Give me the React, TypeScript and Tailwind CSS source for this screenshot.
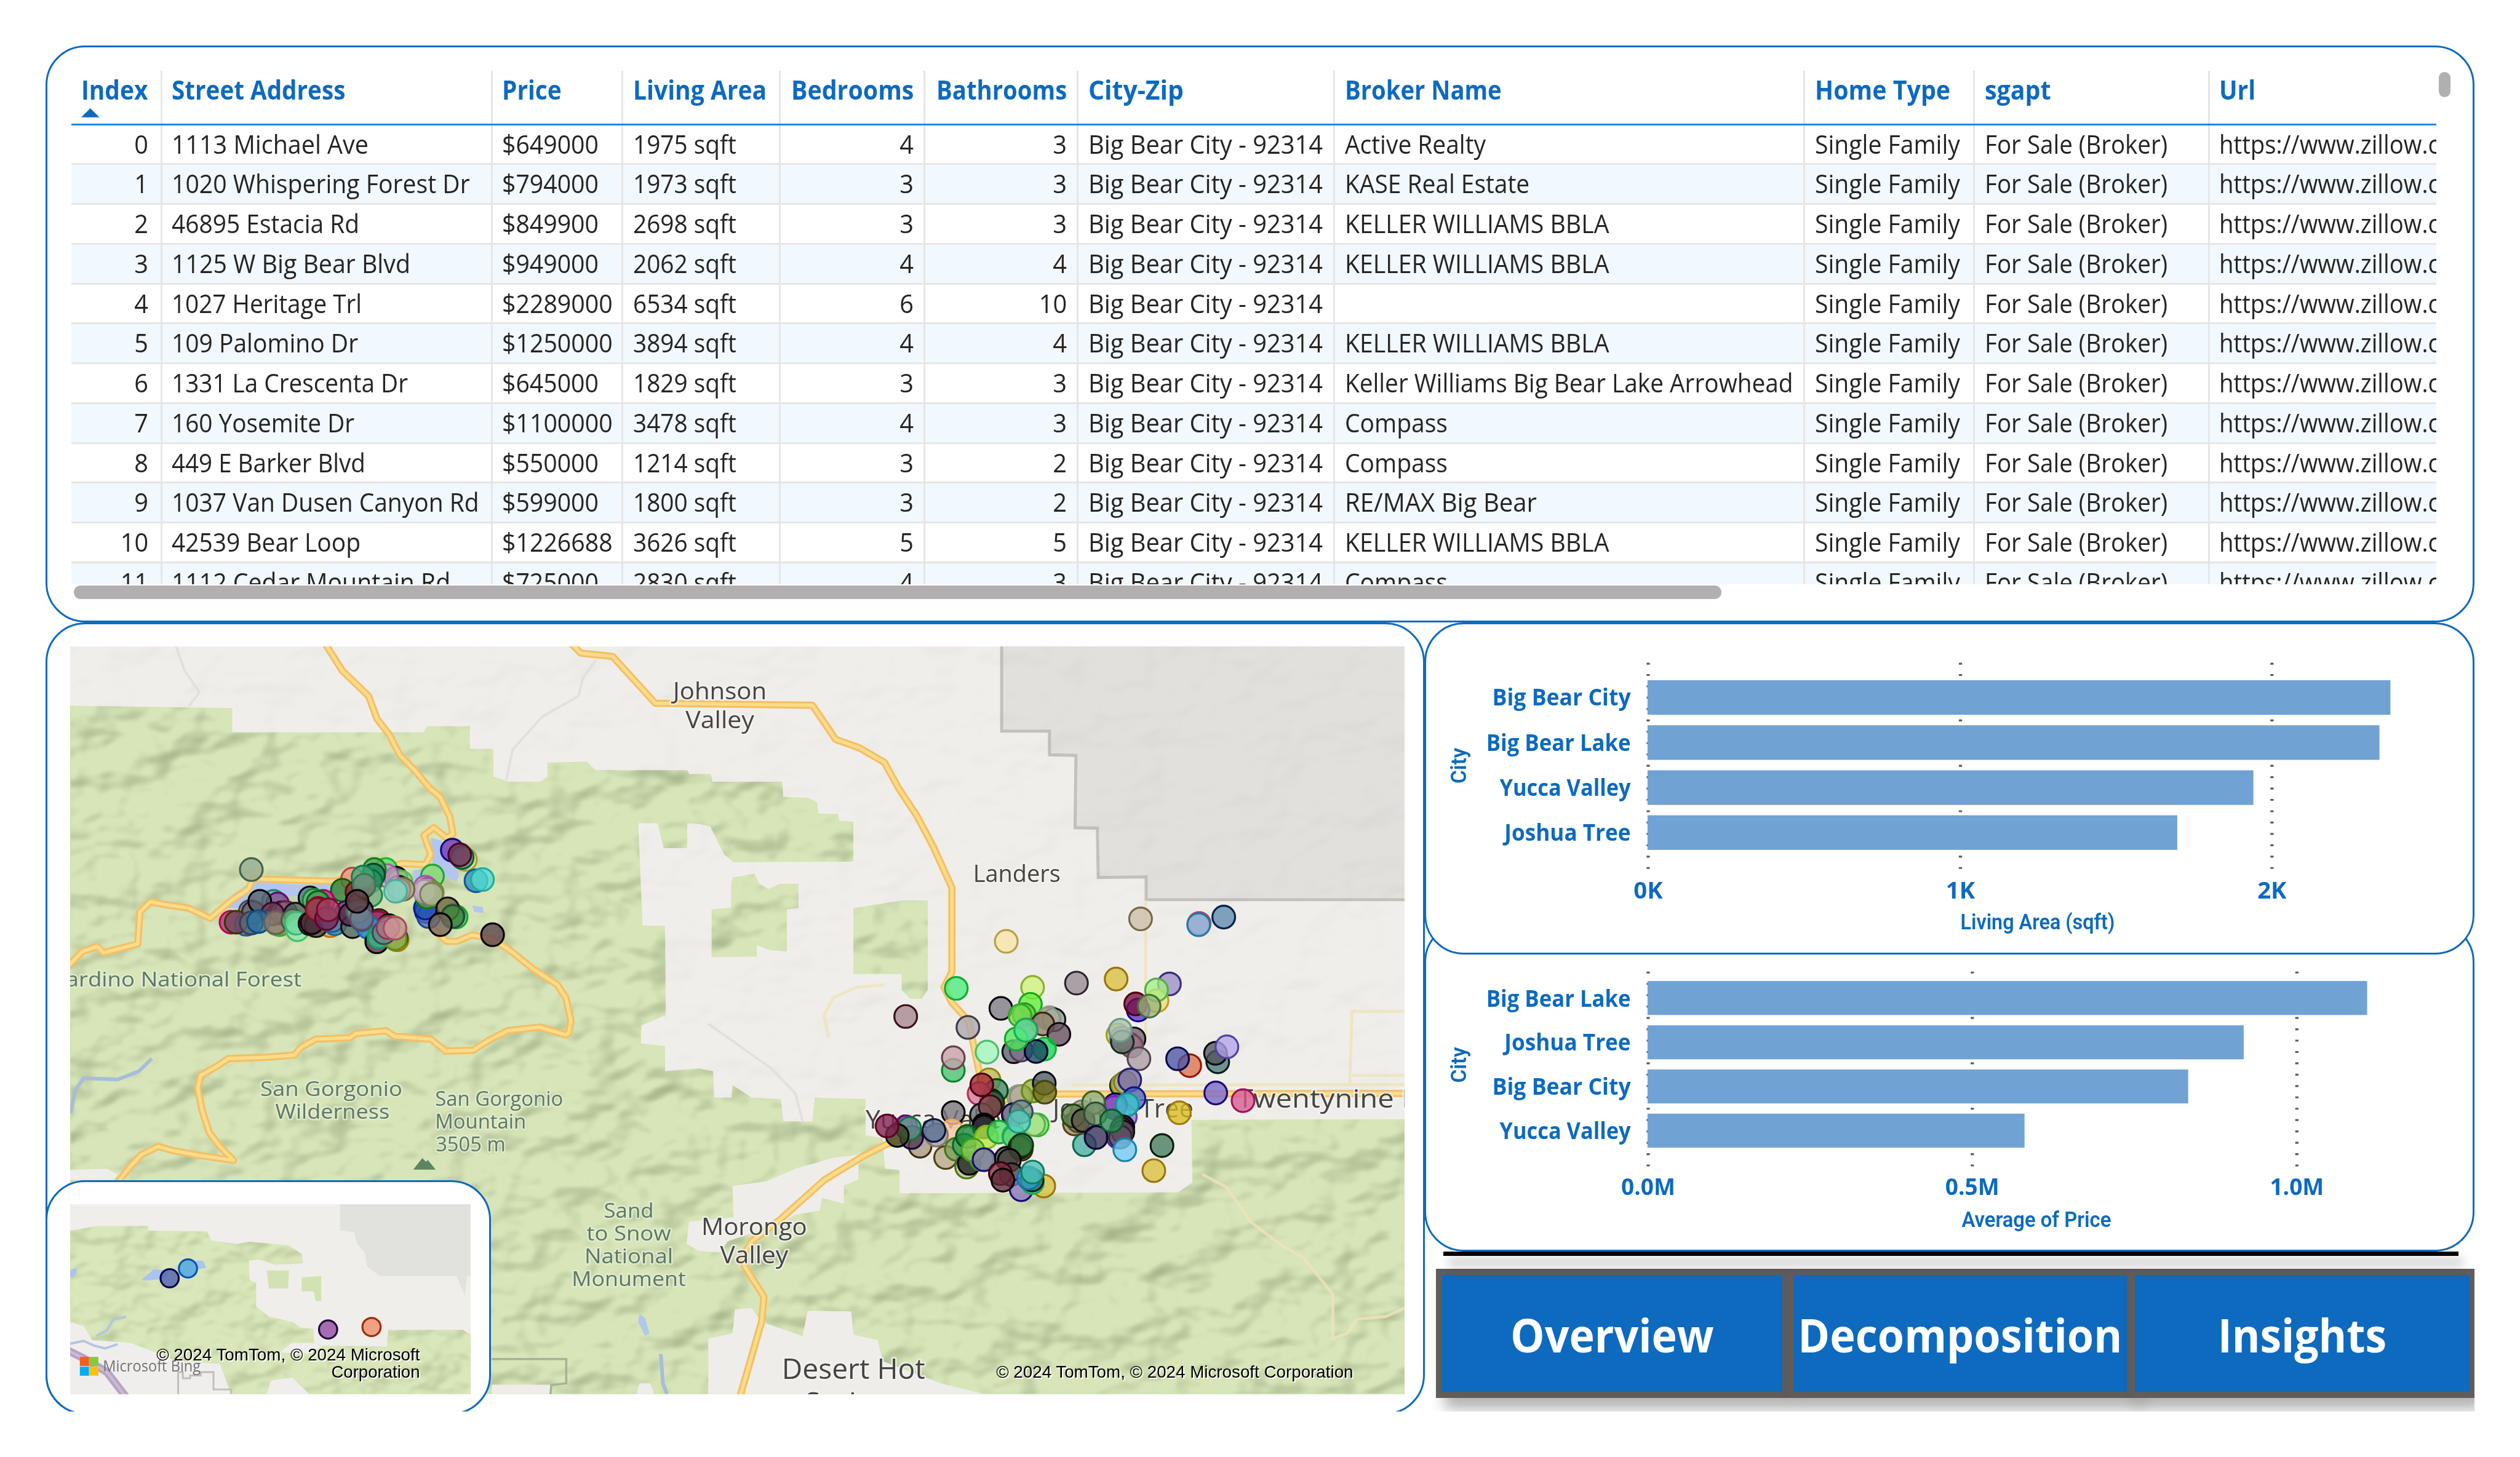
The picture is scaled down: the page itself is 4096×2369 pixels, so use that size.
import { useMemo } from "react";

/* ------------------------------------------------------------------ */
/* Text helper: condenses a line of text to a given advance width      */
/* ------------------------------------------------------------------ */

let measuringContext: CanvasRenderingContext2D | null = null;

function naturalWidth(text: string, size: number, weight: number) {
  if (!measuringContext) measuringContext = document.createElement("canvas").getContext("2d");
  if (!measuringContext) return 0;
  measuringContext.font = `${weight} ${size}px "Open Sans"`;
  return measuringContext.measureText(text).width;
}

type FitProps = {
  text: string;
  size: number;
  weight?: number;
  width?: number;
  align?: "left" | "right" | "center";
};

const ORIGIN = { left: "origin-left", right: "origin-right", center: "origin-center" };

function Fit({ text, size, weight = 400, width, align = "left" }: FitProps) {
  const ratio = useMemo(() => {
    const natural = naturalWidth(text, size, weight);
    return width && natural ? width / natural : 0.943;
  }, [text, size, weight, width]);
  return (
    <span className={`inline-block whitespace-pre ${ORIGIN[align]}`} style={{ transform: `scaleX(${ratio})` }}>
      {text}
    </span>
  );
}

/* ------------------------------------------------------------------ */
/* Listings table                                                      */
/* ------------------------------------------------------------------ */

const COLUMNS: { label: string; width: number; right?: boolean }[] = [
  { label: "Index", width: 110, right: true },
  { label: "Street Address", width: 286 },
  { label: "Price", width: 98 },
  { label: "Living Area", width: 220 },
  { label: "Bedrooms", width: 202, right: true },
  { label: "Bathrooms", width: 215, right: true },
  { label: "City-Zip", width: 157 },
  { label: "Broker Name", width: 258 },
  { label: "Home Type", width: 223 },
  { label: "sgapt", width: 109 },
  { label: "Url", width: 60 },
];

type Listing = [string, number, string, string, number, number, string, number];

const LISTINGS: Listing[] = [
  ["1113 Michael Ave", 324, "$649000", "1975 sqft", 4, 3, "Active Realty", 232],
  ["1020 Whispering Forest Dr", 491, "$794000", "1973 sqft", 3, 3, "KASE Real Estate", 304],
  ["46895 Estacia Rd", 309, "$849900", "2698 sqft", 3, 3, "KELLER WILLIAMS BBLA", 435],
  ["1125 W Big Bear Blvd", 393, "$949000", "2062 sqft", 4, 4, "KELLER WILLIAMS BBLA", 435],
  ["1027 Heritage Trl", 313, "$2289000", "6534 sqft", 6, 10, "", 0],
  ["109 Palomino Dr", 307, "$1250000", "3894 sqft", 4, 4, "KELLER WILLIAMS BBLA", 435],
  ["1331 La Crescenta Dr", 389, "$645000", "1829 sqft", 3, 3, "Keller Williams Big Bear Lake Arrowhead", 738],
  ["160 Yosemite Dr", 301, "$1100000", "3478 sqft", 4, 3, "Compass", 169],
  ["449 E Barker Blvd", 319, "$550000", "1214 sqft", 3, 2, "Compass", 169],
  ["1037 Van Dusen Canyon Rd", 506, "$599000", "1800 sqft", 3, 2, "RE/MAX Big Bear", 316],
  ["42539 Bear Loop", 311, "$1226688", "3626 sqft", 5, 5, "KELLER WILLIAMS BBLA", 435],
  ["1112 Cedar Mountain Rd", 459, "$725000", "2830 sqft", 4, 3, "Compass", 169],
];

const GRID =
  "grid grid-cols-[146px_544px_215.5px_259.5px_237.5px_252.5px_422.5px_774.5px_279.5px_386.5px_900px]";
const CELL = "box-border whitespace-nowrap border-l-[3.05px] border-[#e6e6e6] px-[16px] first:border-l-0 first:px-[20px]";

function Cell({ text, width, right }: { text: string; width?: number; right?: boolean }) {
  return (
    <div className={right ? `${CELL} flex justify-end` : CELL}>
      {text ? <Fit text={text} size={42.67} width={width} align={right ? "right" : "left"} /> : null}
    </div>
  );
}

function ListingsTable() {
  return (
    <section className="relative h-[950px] w-full shrink-0 rounded-[65px] border-[3.05px] border-[#0d6abf] bg-white">
      <div className="mt-[38px] ml-[40px] h-[846.5px] w-[3894px] overflow-hidden">
        <div className={`${GRID} h-[90.4px] border-b-[3.05px] border-[#2385e5] text-[42.67px] leading-[62px] font-bold text-[#0d6abf]`}>
          {COLUMNS.map((column, i) => (
            <div key={column.label} className={column.right ? `${CELL} flex flex-col items-end` : CELL}>
              <Fit
                text={column.label}
                size={42.67}
                weight={700}
                width={column.width}
                align={column.right ? "right" : "left"}
              />
              {i === 0 && (
                <svg viewBox="0 0 30 15" className="mr-auto -ml-[4px] h-[15px] w-[30px]">
                  <path d="M0 15 15 0l15 15z" fill="#0d6abf" />
                </svg>
              )}
            </div>
          ))}
        </div>
        {LISTINGS.map(([street, sw, price, area, beds, baths, broker, bw], i) => (
          <div
            key={street}
            className={`${GRID} h-[65.6px] border-b-[3.05px] border-[#e6e6e6] text-[42.67px] leading-[60px] text-[#252423] odd:bg-[#f1f8fe] even:bg-white`}
          >
            <Cell text={String(i)} right />
            <Cell text={street} width={sw} />
            <Cell text={price} width={price.length > 7 ? 182 : 159} />
            <Cell text={area} width={170} />
            <Cell text={String(beds)} right />
            <Cell text={String(baths)} right />
            <Cell text="Big Bear City - 92314" width={386} />
            <Cell text={broker} width={bw} />
            <Cell text="Single Family" width={239} />
            <Cell text="For Sale (Broker)" width={301} />
            <Cell text="https://www.zillow.com/homedetails/" width={674} />
          </div>
        ))}
      </div>
      <div className="absolute top-[41px] right-[36px] h-[41px] w-[20px] rounded-full bg-[#b1afb0]" />
      <div className="absolute top-[887px] left-[44px] h-[22px] w-[2713px] rounded-full bg-[#b1afb0]" />
    </section>
  );
}

/* ------------------------------------------------------------------ */
/* Map geometry                                                        */
/* ------------------------------------------------------------------ */

type Sheet = [number, number, number, number];
const W: Sheet = [100, 1050, 1.4255, 2.3758];
const E: Sheet = [1150, 1050, 1.3067, 2.3758];
const SW: Sheet = [60, 1650, 1.4255, 2.178];
const SE: Sheet = [1150, 1650, 1.2544, 2.178];

function pts(sheet: Sheet, list: string) {
  return list
    .trim()
    .split(/\s+/)
    .map((pair) => {
      const [x, y] = pair.split(",").map(Number);
      return `${(sheet[0] + x / sheet[2]).toFixed(1)},${(sheet[1] + y / sheet[3]).toFixed(1)}`;
    })
    .join(" ");
}

const FOREST = [
  pts(W, "21,268 402,277 402,372 850,372 860,348 960,348 960,437 1015,437 1015,545 1050,565 1125,565 1142,545 1142,490 1235,487 1255,520 1470,520 1475,535 1525,535"),
  pts(E, "30,565 180,565 182,625 235,628 255,645 258,690 300,692 303,718 333,722 333,878 75,880 55,850 25,740 0,730"),
  pts(W, "1470,728 1470,825 1415,825 1400,728 1355,728 1365,1128 1418,1130 1420,1500"),
  pts(SW, "1475,50 1420,85 1418,150 1475,160 1475,250"),
  pts(SE, "0,240 30,250 32,345 68,345 70,300 110,345 170,350 175,430 235,430 240,345 345,350 345,480 380,490 385,600 415,605 415,688 990,685 1020,650 1018,425 1459,422 1459,1409"),
  pts(SW, "78,1409"),
].join(" ");

const BLOCKS = [
  pts(E, "70,960 75,940 120,925 130,965 150,985 175,965 215,965 215,1060 190,1065 190,1230 155,1225 125,1205 125,1250 28,1252 28,1065 70,1058"),
  pts(E, "333,1060 440,1030 493,1030 493,1380 480,1415 455,1415 437,1380 437,1318 333,1318"),
];

const CLEARINGS = [
  pts(SE, "400,520 320,552 280,560 200,600 140,645 70,662 72,775 -20,790 -25,870 0,895 45,900 60,860 170,795 200,765 250,750 255,705 300,725 300,660 330,640 330,560"),
  pts(SE, "75,1105 110,1100 130,1150 215,1200 225,1110 315,1112 320,1195 370,1215 380,1290 500,1370 590,1409 20,1409 20,1210 70,1190"),
  pts(SW, "78,605 165,600 190,620 180,640 78,640"),
  pts(SW, "1068,1375 1205,1375 1205,1409 1068,1409"),
  pts(SW, "1415,1370 1440,1370 1450,1409 1408,1409"),
];

const BASE = pts(E, "652,36 652,367 755,367 755,460 812,462 810,745 858,747 860,940 963,938 963,1027 1540,1027 1540,20 652,20");

const ROADS = [
  pts(W, "622,30 660,130 722,230 742,320 770,380 795,460 830,520 865,590 890,625 912,700 920,770 905,785 875,745 852,775 868,850 855,890 800,885 765,905 640,955 540,950 450,945 440,985 400,1030 350,1100 300,1060 240,1045 210,1035 185,1075 180,1200 100,1235 85,1210 50,1230 15,1290"),
  pts(W, "860,1120 905,1190 930,1190 965,1165 1010,1180 1050,1220 1110,1300 1165,1360 1185,1410 1197,1500 1192,1548") +
    " " +
    pts(SW, "1243,120 1180,92 1105,105 1060,140 1025,175 960,178 925,135 840,125 820,105 750,115 735,130 655,135 620,165 605,192 540,200 450,205 420,235 385,265 378,310 388,390 405,470 430,520 462,570 380,552 320,535 285,520 245,550 215,600 190,650"),
  pts(W, "1195,20 1220,62 1295,75 1395,258") +
    " " +
    pts(E, "245,266 295,400 345,432 400,490 430,590 470,700 505,820 545,980 545,1310 528,1370 545,1430 580,1500") +
    " " +
    pts(SE, "560,90 578,240 590,330"),
  pts(SE, "1459,330 720,332 640,345 600,400 520,450 440,480 385,515 340,555 260,640 170,780 110,860 90,915 95,950 135,1060 130,1150 85,1420"),
];

const MINOR = [
  pts(E, "962,1030 962,1568"),
  pts(SE, "770,300 1459,298"),
  pts(SE, "1459,35 1350,35 1345,300"),
  pts(SE, "1459,265 1350,265"),
  pts(SE, "1040,620 1090,665 1140,790 1200,870 1250,920 1310,1050 1310,1210 1340,1190 1360,1140 1420,1130 1459,1100"),
  pts(E, "400,1360 340,1370 290,1410 270,1480 280,1568"),
];

const TRAILS = [
  pts(W, "270,36 290,130 325,215 300,270"),
  pts(W, "1255,90 1225,160 1215,230 1130,310 1060,440 1045,560"),
  pts(SE, "20,80 150,240 200,330 215,430"),
];

const WATER = [
  pts(W, "380,1060 400,1010 445,958 560,968 640,962 700,985 640,1015 500,1015 430,1060"),
  pts(W, "868,785 892,795 935,930 928,955 890,930 872,880"),
  pts(W, "825,915 862,900 850,965 830,960"),
  pts(W, "965,1050 990,1055 992,1080 970,1075"),
  pts(SW, "1415,1120 1428,1135 1438,1190 1428,1200 1412,1150"),
];

const STREAMS = [
  pts(SW, "270,205 240,250 190,280 110,275 90,320 80,400"),
  pts(SW, "1465,1265 1470,1370 1480,1409"),
];

type Dot = [number, number, string, string];

function toDots(sheet: Sheet, rows: string): Dot[] {
  return rows
    .trim()
    .split(/\s*\n\s*/)
    .map((row) => {
      const [x, y, fill, stroke] = row.split(" ");
      return [sheet[0] + Number(x) / sheet[2], sheet[1] + Number(y) / sheet[3], fill, stroke];
    });
}

const BIG_BEAR = toDots([350, 1370, 3, 3], `
190 188 #96aa90 #45624a
1183 92 #6a35b8 #12068a
1248 138 #e8e488 #a8a030
1232 128 #3c9a70 #066048
1220 115 #76305c #4e0420
1300 243 #3090c0 #0c58a0
1332 237 #50dcd0 #20ac9c
1085 220 #84dc78 #28a030
1055 395 #3050b8 #081c78
1066 420 #5070c8 #1c449c
1050 378 #2050b0 #06208c
1058 324 #60a040 #107818
1065 305 #c070c0 #a040a0
1050 275 #d8a0d0 #a858a8
1062 285 #c890c8 #a050a4
1084 302 #90b048 #6c9030
1045 295 #d0c0cc #a494a0
1080 310 #a8b890 #788458
1202 422 #50c868 #10a830
1188 415 #50a068 #208848
1160 382 #6a6438 #141008
1185 420 #408840 #284838
1124 460 #746458 #050505
1382 510 #584048 #050505
855 188 #58e068 #20b838
905 230 #404040 #080808
930 250 #90e080 #50c050
918 275 #a0c8a0 #181818
860 218 #d0a0d0 #a060a8
690 235 #f09080 #c04040
798 188 #50a850 #108018
794 215 #108858 #064830
780 245 #309060 #106838
640 290 #30802c #086010
780 315 #70b080 #208848
712 300 #803838 #700810
745 270 #803030 #6c0810
742 225 #48a878 #108050
748 265 #709080 #387858
940 285 #b0b090 #706848
920 290 #b0a890 #988878
903 295 #80d8c8 #48b0a0
480 328 #607080 #080810
545 345 #d02080 #b00060
500 340 #60c070 #108830
520 350 #40a050 #086018
90 448 #b83078 #b80060
165 458 #4070a0 #1858b0
300 345 #60b0a0 #208878
320 358 #8c4c98 #601068
185 395 #807880 #504850
200 400 #686070 #302834
232 345 #585c6c #050508
115 448 #704858 #383808
190 452 #606878 #403c50
330 460 #90c070 #40a830
315 455 #a0b080 #709048
340 402 #606050 #101008
360 400 #906080 #701850
295 407 #70405c #380c30
226 445 #2c74a0 #085080
310 450 #908070 #686058
408 408 #506058 #101414
395 440 #80a080 #406048
418 485 #90e8b0 #40c068
412 453 #70dca0 #38b870
580 465 #e0a060 #d07010
480 455 #504040 #181010
510 465 #4c5038 #181808
490 450 #482838 #180410
660 400 #683080 #400860
520 380 #903040 #800820
515 385 #984050 #880c28
603 455 #3c98c4 #1068a8
590 440 #5080b0 #205890
562 430 #782850 #600434
570 387 #a04060 #780c30
690 470 #4c6460 #080808
680 410 #602848 #200818
735 390 #503850 #100810
820 440 #686848 #282808
815 450 #b81868 #900050
870 465 #606050 #101008
765 470 #3090c8 #0868b0
770 475 #4090c0 #1868b8
735 435 #607898 #404868
715 390 #807888 #605860
718 395 #789088 #486860
735 430 #687890 #585070
713 345 #583840 #050505
910 535 #c8a850 #a87808
905 525 #508858 #085040
810 545 #583050 #050505
820 520 #38c088 #10a060
900 530 #98b848 #688c18
895 475 #98c850 #78a818
845 500 #688888 #404858
865 475 #b07088 #883858
900 478 #d09898 #b04868
`);

const LANDERS = toDots(E, `
951 1102 #cabfa6 #76684a
1077 1120 #e07890 #b83c58
1076 1125 #86bae0 #1c7cac
1130 1095 #5f8bae #04204a
662 1190 #f8e5a6 #b8a040
`);

const HI_DESERT = toDots([1420, 1580, 2.45, 3], `
174 284 #a58890 #3e0e1c
378 145 #4cec7c #0cac34
425 338 #aca6b0 #3c3844
558 244 #7c7a84 #05050c
686 140 #d0f47c #88b030
863 119 #978a92 #2c2230
1023 99 #dac03c #9a7408
1238 123 #9c90c8 #3a2c7c
1188 206 #f0de70 #c09c20
1186 153 #a4f084 #54b044
1112 252 #5434c8 #140088
1102 222 #781040 #500010
1156 233 #98b47c #486c40
366 550 #48c470 #108030
366 488 #c8a0a8 #703c50
502 460 #a0f8bc #48c070
677 224 #60f038 #10a818
652 275 #60d040 #289820
635 280 #74d850 #30a828
755 290 #a0a8a0 #80a080
772 300 #98a498 #101414
750 295 #a8b0a0 #909888
727 321 #908468 #3c2c10
792 372 #64505c #140814
610 458 #5c606c #0c0810
660 350 #b070c0 #8040a0
640 450 #807088 #503860
734 445 #14d850 #10b040
700 457 #184468 #04042c
620 395 #50e85c #10a830
658 352 #50e888 #18b050
1030 375 #d0d070 #a0a020
1095 395 #70606c #100c14
1075 420 #a06c7c #803048
1085 430 #987884 #704858
1045 390 #a088b8 #806ca0
1048 410 #687468 #142c1c
1040 352 #acc4b4 #6c9884
1115 493 #a89ca4 #544450
1320 527 #d8744c #981404
1271 493 #4c54a4 #040850
1433 508 #4c7874 #04201c
1424 466 #50545c #080c10
1470 434 #b4a4ec #5440a8
1425 662 #7868cc #18087c
1535 700 #d85894 #a01058
510 597 #c0b850 #908810
640 680 #a8a898 #080c08
630 680 #b0b098 #909880
688 652 #98b440 #688810
733 614 #505868 #080c14
735 658 #70701c #444808
540 650 #408868 #084818
520 700 #406050 #081c08
525 710 #305838 #043810
470 665 #d87898 #b03060
481 622 #a02838 #4c0008
480 770 #687078 #101418
515 730 #804848 #380810
490 820 #282028 #050505
490 830 #302c34 #050505
366 759 #78747e #050508
608 770 #605878 #10083c
175 830 #903098 #68047c
232 925 #a8987c #3c280c
198 882 #503450 #14043c
190 838 #609890 #107838
140 872 #384020 #050805
99 825 #802050 #600020
360 850 #fcc8a0 #f0a860
298 870 #a0a0a0 #807870
288 847 #587094 #081438
335 981 #b8a888 #504018
378 940 #80a058 #407818
420 1028 #b0c888 #4c7808
430 1010 #1c1c1c #050505
410 920 #38a050 #086828
423 877 #18883c #045418
500 880 #b8e840 #80b810
480 990 #70c040 #389818
445 944 #90d050 #40a020
490 992 #8478b0 #200878
705 820 #70f060 #28b828
690 818 #b0e090 #68a850
550 855 #50dc64 #18a038
610 875 #70e880 #20b850
612 880 #58d078 #20a850
640 755 #709080 #304860
630 803 #58d0c0 #209888
580 985 #404848 #050808
640 940 #806048 #402008
635 930 #404c30 #141808
642 920 #348040 #04380c
592 995 #444038 #050505
600 1065 #504048 #100c10
640 1140 #8474bc #200878
731 1122 #dac03c #9c7408
685 1105 #58d090 #20a858
684 1092 #386868 #082020
556 1060 #803040 #40000c
566 1093 #5c2c38 #0c0408
670 1082 #30a0c8 #1070a8
686 1053 #4cc0b0 #108060
1045 625 #9ca058 #080c30
1050 620 #c8c860 #989818
1060 610 #b0a880 #808020
1078 598 #7870a8 #201c78
1095 690 #5068c0 #081890
1060 780 #9080d0 #6040b8
1020 720 #6040a0 #080448
1015 735 #9050c8 #7828b0
1068 720 #38c8c8 #109898
895 918 #48b0a0 #086850
855 815 #a09068 #584018
870 800 #807868 #504c30
885 755 #a09890 #807870
850 775 #608050 #204810
890 798 #5c5448 #100c08
932 710 #90b078 #386028
940 765 #708c68 #285038
1050 830 #605068 #0c040c
1045 840 #483848 #140814
1030 880 #7068b8 #4030a0
1050 855 #584458 #140c18
942 882 #38305c #08042c
1040 880 #605060 #302838
1005 800 #309058 #085c28
1058 943 #70ccf4 #1880b0
1208 922 #447c5c #04200c
1175 1046 #dac03c #9c7408
1278 760 #dabc20 #a07c08
`);

const MEDIANS = toDots(SW, `
355 958 #42a2e8 #0c50b4
312 993 #4c5cb0 #04044c
684 1177 #9048a0 #22083c
786 1168 #f08c68 #9c2c04
`);

function Dots({ dots, r }: { dots: Dot[]; r: number }) {
  return (
    <g strokeWidth="3.2">
      {dots.map(([x, y, fill, stroke], i) => (
        <circle key={i} cx={x} cy={y} r={r} fill={fill} fillOpacity="0.78" stroke={stroke} />
      ))}
    </g>
  );
}

type LabelRow = [string, number, number, number];

function Labels({ rows, size, color, halo, anchor = "middle" }: {
  rows: LabelRow[];
  size: number;
  color: string;
  halo: string;
  anchor?: "start" | "middle" | "end";
}) {
  return (
    <g
      className="font-['Open_Sans',sans-serif]"
      fontSize={size}
      fontWeight="500"
      fill={color}
      stroke={halo}
      strokeWidth="5"
      strokeLinejoin="round"
      paintOrder="stroke"
      textAnchor={anchor}
    >
      {rows.map(([text, x, y, width]) => (
        <text key={text + y} x={x} y={y} textLength={width} lengthAdjust="spacingAndGlyphs">
          {text}
        </text>
      ))}
    </g>
  );
}

function Relief({ id, seed, frequency, scale }: { id: string; seed: number; frequency: string; scale: number }) {
  return (
    <filter id={id} x="0" y="0" width="100%" height="100%" colorInterpolationFilters="sRGB">
      <feTurbulence type="fractalNoise" baseFrequency={frequency} numOctaves="3" seed={seed} />
      <feDiffuseLighting surfaceScale={scale} diffuseConstant="1.15" lightingColor="#fff">
        <feDistantLight azimuth="225" elevation="60" />
      </feDiffuseLighting>
      <feGaussianBlur stdDeviation="2" />
    </filter>
  );
}

const ATTRIBUTION = "font-['Liberation_Sans',sans-serif] [filter:drop-shadow(2.5px_2.5px_0_#fff)]";

function RegionMap() {
  return (
    <svg viewBox="115 1065 2198 1232" preserveAspectRatio="none" className="h-[1232px] w-[2198px]">
      <defs>
        <Relief id="relief" seed={7} frequency="0.009 0.014" scale={30} />
        <clipPath id="forest">
          <polygon points={FOREST} />
          {BLOCKS.map((b) => (
            <polygon key={b} points={b} />
          ))}
        </clipPath>
      </defs>
      <rect x="115" y="1065" width="2198" height="1232" fill="#f0eeea" />
      <polygon points={FOREST} fill="#cddfa8" />
      {BLOCKS.map((b) => (
        <polygon key={b} points={b} fill="#cddfa8" />
      ))}
      <polygon points={BASE} fill="#e2e0dc" stroke="#c4c1bb" strokeWidth="5" />
      <g clipPath="url(#forest)">
        <rect x="115" y="1065" width="2198" height="1232" filter="url(#relief)" className="opacity-20 mix-blend-multiply" />
      </g>
      <rect x="115" y="1065" width="2198" height="1232" filter="url(#relief)" className="opacity-[0.03] mix-blend-multiply" />
      {CLEARINGS.map((c) => (
        <polygon key={c} points={c} fill="#efedea" />
      ))}
      <polyline points={pts(SW, "1068,1283 1243,1283 1243,1370 1208,1376 1206,1409")} fill="none" stroke="#a5b394" strokeWidth="3.5" />
      {WATER.map((w) => (
        <polygon key={w} points={w} fill="#b3c6ee" />
      ))}
      <g fill="none" stroke="#a9bcd8" strokeWidth="6" strokeLinejoin="round">
        {STREAMS.map((s) => (
          <polyline key={s} points={s} />
        ))}
      </g>
      <g fill="none" stroke="#dcddda" strokeWidth="4" strokeLinejoin="round" opacity="0.8">
        {TRAILS.map((s) => (
          <polyline key={s} points={s} />
        ))}
      </g>
      <g fill="none" stroke="#efe3b8" strokeWidth="5" strokeLinejoin="round" opacity="0.8">
        {MINOR.map((s) => (
          <polyline key={s} points={s} />
        ))}
      </g>
      <g fill="none" stroke="#f3bf68" strokeWidth="12" strokeLinejoin="round">
        {ROADS.map((s) => (
          <polyline key={s} points={s} />
        ))}
      </g>
      <g fill="none" stroke="#fbdc88" strokeWidth="5.5" strokeLinejoin="round">
        {ROADS.map((s) => (
          <polyline key={s} points={s} />
        ))}
      </g>
      <path d="M680 1927l15-19 6 6 3-3 13 16z" fill="#5d8560" />
      <Labels
        size={39}
        color="#444"
        halo="#f4f2efcc"
        rows={[
          ["Johnson", 1185, 1152.5, 154],
          ["Valley", 1185, 1199.5, 113],
          ["Landers", 1674, 1453, 144],
          ["Morongo", 1241.5, 2034.5, 174],
          ["Valley", 1241.5, 2081.5, 112],
        ]}
      />
      <Labels
        size={43}
        color="#444"
        halo="#f4f2efcc"
        anchor="start"
        rows={[
          ["Yucca Valley", 1425, 1859, 245],
          ["Joshua Tree", 1733, 1841, 232],
          ["Twentynine Palms", 2037, 1825, 405],
        ]}
      />
      <Labels
        size={46}
        color="#444"
        halo="#f4f2efcc"
        rows={[
          ["Desert Hot", 1405, 2272, 236],
          ["Springs", 1405, 2327, 160],
        ]}
      />
      <Labels
        size={34}
        color="#5e7862"
        halo="#e4eed4cc"
        rows={[
          ["San Gorgonio", 545, 1806, 234],
          ["Wilderness", 547, 1843, 188],
          ["Sand", 1035, 2006, 82],
          ["to Snow", 1035, 2043.5, 139],
          ["National", 1035, 2081, 146],
          ["Monument", 1035, 2118.5, 188],
        ]}
      />
      <Labels
        size={34}
        color="#5e7862"
        halo="#e4eed4cc"
        anchor="start"
        rows={[
          ["San Gorgonio", 716, 1822, 211],
          ["Mountain", 716, 1859.5, 150],
          ["3505 m", 717, 1897, 115],
        ]}
      />
      <Labels
        size={34}
        color="#5e7862"
        halo="#e4eed4cc"
        anchor="end"
        rows={[["San Bernardino National Forest", 496, 1625.5, 544]]}
      />
      <Dots dots={BIG_BEAR} r={18.7} />
      <Dots dots={LANDERS} r={18.7} />
      <Dots dots={HI_DESERT} r={18.7} />
      <text
        x="1640"
        y="2270"
        fontSize="28"
        fill="#000"
        textLength="588"
        lengthAdjust="spacingAndGlyphs"
        className={ATTRIBUTION}
      >
        © 2024 TomTom, © 2024 Microsoft Corporation
      </text>
    </svg>
  );
}

const MINI_FOREST = pts(SW, "78,822 145,805 262,805 262,822 400,825 410,858 470,870 500,862 590,875 622,905 625,940 560,945 520,925 498,930 500,1000 515,1010 515,1095 545,1130 600,1150 620,1170 650,1175 650,1225 670,1235 822,1238 825,1178 1000,1178 1019,1195 1019,1409 78,1409");
const MINI_BLOCKS = [
  pts(SW, "540,965 592,965 590,1030 545,1030"),
  pts(SW, "622,990 668,985 668,1075 655,1075 650,1040 622,1040"),
];
const MINI_CLEAR = [
  pts(SW, "78,1150 110,1165 130,1215 220,1225 330,1290 430,1300 456,1409 78,1409"),
  pts(SW, "540,1409 550,1360 600,1350 620,1380 640,1409"),
  pts(SW, "570,1260 600,1225 650,1225 670,1238 640,1262"),
];

function MiniMap() {
  return (
    <svg viewBox="115 1984 660 313" preserveAspectRatio="none" className="h-[313px] w-[660px]">
      <defs>
        <Relief id="relief-mini" seed={3} frequency="0.014 0.022" scale={22} />
        <clipPath id="mini-forest">
          <polygon points={MINI_FOREST} />
        </clipPath>
      </defs>
      <rect x="115" y="1984" width="660" height="313" fill="#f0eeeb" />
      <polygon points={MINI_FOREST} fill="#d3e3b0" />
      <g clipPath="url(#mini-forest)">
        <rect x="115" y="1984" width="660" height="313" filter="url(#relief-mini)" className="opacity-15 mix-blend-multiply" />
      </g>
      {MINI_CLEAR.map((c) => (
        <polygon key={c} points={c} fill="#f0eeed" />
      ))}
      {MINI_BLOCKS.map((c) => (
        <polygon key={c} points={c} fill="#d3e2b2" />
      ))}
      <polygon
        points={pts(SW, "712,727 712,822 745,828 752,870 770,900 775,950 805,985 985,985 1005,1055 1010,985 1019,985 1019,727")}
        fill="#e1e1de"
      />
      <polygon points={pts(SW, "245,1000 275,960 310,965 300,995 265,1000")} fill="#a9c4ee" />
      <polygon points={pts(SW, "370,930 390,930 398,955 380,960")} fill="#a9c4ee" />
      <polygon points={pts(SW, "78,965 92,955 95,970 85,990 78,990")} fill="#a9c4ee" />
      <polyline
        points={pts(SW, "210,1132 180,1140 165,1180 140,1200")}
        fill="none"
        stroke="#b4c6dc"
        strokeWidth="4"
      />
      <polyline
        points={pts(SW, "78,1228 110,1218 135,1235 160,1245 190,1230")}
        fill="none"
        stroke="#b4c6dc"
        strokeWidth="4"
      />
      <polyline points={pts(SW, "70,1250 110,1280 165,1330 210,1420")} fill="none" stroke="#b8a3c8" strokeWidth="13" />
      <polyline points={pts(SW, "70,1250 110,1280 165,1330 210,1420")} fill="none" stroke="#cdbcd8" strokeWidth="4" />
      <polyline
        points={pts(SW, "332,1409 332,1330 343,1330 343,1352 360,1352 360,1342 385,1342 385,1330 415,1330 415,1392 456,1392 456,1409")}
        fill="none"
        stroke="#c0beb8"
        strokeWidth="3"
      />
      <Dots dots={MEDIANS} r={15} />
      <g>
        <rect x="131" y="2235.5" width="15" height="15" fill="#f25f22" />
        <rect x="146.5" y="2235.5" width="15" height="15" fill="#8cc63f" />
        <rect x="131" y="2251.5" width="15" height="15" fill="#00adef" />
        <rect x="146.5" y="2251.5" width="15" height="15" fill="#fdc010" />
      </g>
      <text
        x="169"
        y="2260"
        fontSize="26"
        fontWeight="500"
        fill="#737373"
        textLength="161"
        lengthAdjust="spacingAndGlyphs"
        className="font-['Open_Sans',sans-serif]"
      >
        Microsoft Bing
      </text>
      <g className={ATTRIBUTION} fontSize="28" textAnchor="end" fill="#000">
        <text x="691" y="2241.5" textLength="434" lengthAdjust="spacingAndGlyphs">
          © 2024 TomTom, © 2024 Microsoft
        </text>
        <text x="691" y="2270" textLength="146" lengthAdjust="spacingAndGlyphs">
          Corporation
        </text>
      </g>
    </svg>
  );
}

/* ------------------------------------------------------------------ */
/* Bar charts                                                          */
/* ------------------------------------------------------------------ */

type ChartProps = {
  height: number;
  bars: { label: string; labelWidth: number; y: number; end: number; baseline: number }[];
  barHeight: number;
  ticks: { label: string; x: number; width: number }[];
  grid: [number, number];
  tickY: number;
  title: string;
  titleX: number;
  titleY: number;
  titleWidth: number;
  cityY: number;
};

const AXIS_X = 367.6;

function BarChart({ height, bars, barHeight, ticks, grid, tickY, title, titleX, titleY, titleWidth, cityY }: ChartProps) {
  return (
    <svg
      viewBox={`0 0 1724 ${height}`}
      className="block w-[1724px] font-['Open_Sans',sans-serif]"
      fill="#0d6abf"
      fontWeight="700"
      fontSize="37.3"
    >
      <g stroke="#605e5c" strokeWidth="5.33" strokeDasharray="3.2 15.5">
        {ticks.map((tick) => (
          <line key={tick.label} x1={tick.x} x2={tick.x} y1={grid[0]} y2={grid[1]} />
        ))}
      </g>
      {bars.map((bar) => (
        <g key={bar.label}>
          <rect x={AXIS_X - 3} y={bar.y} width={bar.end - AXIS_X + 3} height={barHeight} fill="#70a3d3" />
          <text x="337" y={bar.baseline} textAnchor="end" textLength={bar.labelWidth} lengthAdjust="spacingAndGlyphs">
            {bar.label}
          </text>
        </g>
      ))}
      {ticks.map((tick) => (
        <text
          key={tick.label}
          x={tick.x}
          y={tickY}
          textAnchor="middle"
          textLength={tick.width}
          lengthAdjust="spacingAndGlyphs"
        >
          {tick.label}
        </text>
      ))}
      <g className="font-['Roboto',sans-serif]" fontSize="35" fontWeight="600" textAnchor="middle">
        <text x={titleX} y={titleY} textLength={titleWidth} lengthAdjust="spacingAndGlyphs">
          {title}
        </text>
        <text
          transform={`translate(65.5 ${cityY}) rotate(-90)`}
          textLength="59"
          lengthAdjust="spacingAndGlyphs"
        >
          City
        </text>
      </g>
    </svg>
  );
}

/* Chart coordinates start at the inner corner of their panel. */
function LivingAreaChart() {
  return (
    <section className="relative z-10 h-[547px] rounded-[65px] border-[3.05px] border-[#0d6abf] bg-white">
      <BarChart
        height={541}
        barHeight={57}
        grid={[63.3, 404]}
        tickY={451.5}
        title="Living Area (sqft)"
        titleX={1007}
        titleY={503}
        titleWidth={254}
        cityY={233}
        ticks={[
          { label: "0K", x: 365.7, width: 48 },
          { label: "1K", x: 880, width: 48 },
          { label: "2K", x: 1393, width: 48 },
        ]}
        bars={[
          { label: "Big Bear City", labelWidth: 228, y: 92.2, end: 1588, baseline: 134 },
          { label: "Big Bear Lake", labelWidth: 238, y: 166.4, end: 1570, baseline: 208.3 },
          { label: "Yucca Valley", labelWidth: 216, y: 240.6, end: 1362.4, baseline: 282.5 },
          { label: "Joshua Tree", labelWidth: 208, y: 314.7, end: 1237, baseline: 357 },
        ]}
      />
    </section>
  );
}

function AveragePriceChart() {
  return (
    <section className="relative -mt-[52px] h-[542px] rounded-[65px] border-[3.05px] border-[#0d6abf] bg-white">
      <BarChart
        height={536}
        barHeight={56}
        grid={[77.7, 400]}
        tickY={446}
        title="Average of Price"
        titleX={1005}
        titleY={498}
        titleWidth={246}
        cityY={231.5}
        ticks={[
          { label: "0.0M", x: 365.7, width: 89 },
          { label: "0.5M", x: 899.5, width: 89 },
          { label: "1.0M", x: 1434, width: 89 },
        ]}
        bars={[
          { label: "Big Bear Lake", labelWidth: 238, y: 93.3, end: 1549.7, baseline: 135.5 },
          { label: "Joshua Tree", labelWidth: 208, y: 166.3, end: 1346.5, baseline: 208 },
          { label: "Big Bear City", labelWidth: 228, y: 239, end: 1255, baseline: 280.5 },
          { label: "Yucca Valley", labelWidth: 216, y: 311.8, end: 985.5, baseline: 353.5 },
        ]}
      />
    </section>
  );
}

/* ------------------------------------------------------------------ */
/* Page navigation                                                     */
/* ------------------------------------------------------------------ */

const BUTTON =
  "flex h-[213px] shrink-0 items-center justify-center border-[10.15px] border-[#605c5c] bg-[#0d6abf] pt-[4px] text-[76px] leading-[100px] font-bold text-white shadow-[14px_18px_22px_rgba(0,0,0,0.3)]";

function Navigation() {
  return (
    <nav className="mt-[21px] ml-[20px] flex">
      <button className={`${BUTTON} w-[580px]`}>
        <Fit text="Overview" size={76} weight={700} width={335} align="center" />
      </button>
      <button className={`${BUTTON} -ml-[2px] w-[570px]`}>
        <Fit text="Decomposition" size={76} weight={700} width={534} align="center" />
      </button>
      <button className={`${BUTTON} -ml-[7px] w-[571px]`}>
        <Fit text="Insights" size={76} weight={700} width={278} align="center" />
      </button>
    </nav>
  );
}

export default function App() {
  return (
    <div className="h-[2369px] w-[4096px] overflow-hidden bg-white">
      <div className="h-[2400px] w-[4150px] bg-white p-[75px] font-['Open_Sans',sans-serif] [zoom:0.987]">
        <main className="flex h-[2250px] w-[4000px] flex-col overflow-hidden">
          <ListingsTable />
          <div className="flex">
            <section className="relative h-[1305px] w-[2272px] shrink-0 rounded-[65px] border-[3.05px] border-[#0d6abf] bg-white pt-[37px] pl-[37px]">
              <RegionMap />
              <div className="absolute top-[916px] -left-[3.05px] h-[386px] w-[734px] rounded-[65px] border-[3.05px] border-[#0d6abf] bg-white pt-[37px] pl-[37px]">
                <MiniMap />
              </div>
            </section>
            <div className="relative -ml-[2px] w-[1730px] shrink-0">
              <LivingAreaChart />
              <AveragePriceChart />
              <div className="relative ml-[32px] h-[7px] w-[1672px] bg-black shadow-[8px_14px_16px_rgba(0,0,0,0.35)]" />
              <Navigation />
            </div>
          </div>
        </main>
      </div>
    </div>
  );
}
